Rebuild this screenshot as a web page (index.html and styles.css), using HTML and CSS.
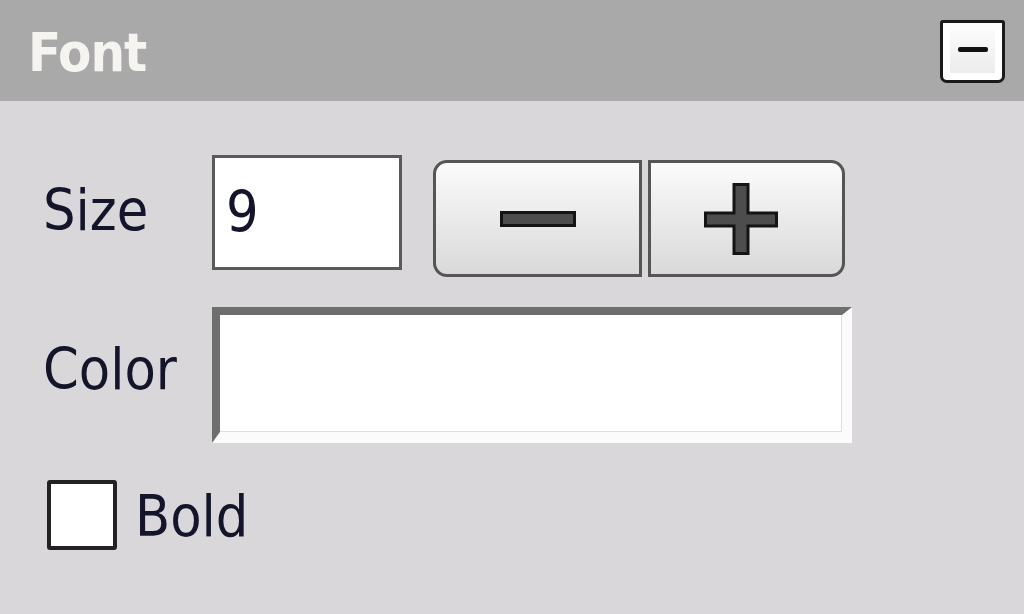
FILE: index.html
```html
<!DOCTYPE html>
<html>
<head>
<meta charset="utf-8">
<link rel="stylesheet" href="styles.css">
</head>
<body>
<div class="panel">
  <div class="header">
    <span class="title">Font</span>
    <div class="collapse">
      <div class="collapse-inner"><span class="collapse-bar"></span></div>
    </div>
  </div>
  <div class="content">
    <div class="row row-size">
      <label class="label">Size</label>
      <div class="size-input">9</div>
      <div class="stepper">
        <div class="step step-minus">
          <svg width="76" height="16" viewBox="0 0 76 16"><rect x="1.5" y="1.5" width="73" height="13" fill="#4d4d4d" stroke="#141414" stroke-width="3"/></svg>
        </div>
        <div class="step step-plus">
          <svg width="74" height="72" viewBox="0 0 74 72"><path d="M30 1.5 H44 V30 H72.5 V43 H44 V70.5 H30 V43 H1.5 V30 H30 Z" fill="#4d4d4d" stroke="#141414" stroke-width="3" stroke-linejoin="miter"/></svg>
        </div>
      </div>
    </div>
    <div class="row row-color">
      <label class="label">Color</label>
      <div class="color-box"></div>
    </div>
    <div class="row row-bold">
      <span class="checkbox"></span>
      <span class="check-label">Bold</span>
    </div>
  </div>
</div>
</body>
</html>
```
FILE: styles.css
```css
html, body {
  margin: 0;
  padding: 0;
}
body {
  width: 1024px;
  height: 614px;
  overflow: hidden;
  background: #d9d7da;
  font-family: "DejaVu Sans Condensed", "DejaVu Sans", sans-serif;
  font-stretch: condensed;
  color: #14142a;
}
.panel {
  width: 1024px;
  height: 614px;
  display: flex;
  flex-direction: column;
}
.header {
  height: 101px;
  background: #a9a9a9;
  display: flex;
  align-items: center;
  justify-content: space-between;
  padding: 0 19px 0 28px;
  box-sizing: border-box;
}
.title {
  font-weight: bold;
  font-size: 54px;
  letter-spacing: -1px;
  color: #f6f4f0;
  line-height: 1;
  margin-top: 4px;
}
.collapse {
  width: 65px;
  height: 63px;
  box-sizing: border-box;
  border: 3px solid #1a1a1a;
  border-radius: 3px 3px 7px 7px;
  background: #ffffff;
  padding: 7px;
  margin-top: 2px;
}
.collapse-inner {
  width: 100%;
  height: 100%;
  background: linear-gradient(#fbfbfb, #ececec);
  display: flex;
  align-items: center;
  justify-content: center;
}
.collapse-bar {
  width: 30px;
  height: 5px;
  background: #111;
  border-radius: 2px;
  margin-top: -4px;
}
.content {
  padding: 54px 0 0 43px;
  display: flex;
  flex-direction: column;
}
.row {
  display: flex;
  align-items: center;
}
.label {
  width: 169px;
  font-size: 57px;
  line-height: 1;
}
.row-size {
  align-items: flex-start;
  height: 122px;
}
.row-size .label {
  margin-top: 27px;
}
.size-input {
  width: 190px;
  height: 115px;
  box-sizing: border-box;
  border: 3px solid #5a5a5a;
  background: #ffffff;
  font-size: 57px;
  line-height: 1;
  padding: 26px 0 0 11px;
}
.stepper {
  display: flex;
  margin: 5px 0 0 31px;
  gap: 6px;
}
.step {
  height: 117px;
  box-sizing: border-box;
  border: 3px solid #555;
  background: linear-gradient(#fbfbfb, #d9d9d9);
  display: flex;
  align-items: center;
  justify-content: center;
}
.step-minus {
  width: 209px;
  border-radius: 14px 0 0 14px;
}
.step-plus {
  width: 197px;
  border-radius: 0 14px 14px 0;
  padding-right: 12px;
}
.row-color {
  margin-top: 30px;
}
.row-color .label {
  margin-top: -12px;
}
.color-box {
  width: 640px;
  height: 136px;
  box-sizing: border-box;
  background: #ffffff;
  border-style: solid;
  border-width: 8px 10px 11px 8px;
  border-color: #6e6e6e #fbfbfb #fbfbfb #6e6e6e;
  box-shadow: inset -1px -1px 0 #dedede;
}
.row-bold {
  margin-top: 37px;
}
.checkbox {
  width: 70px;
  height: 70px;
  box-sizing: border-box;
  border: 4px solid #222;
  border-radius: 3px;
  background: #ffffff;
  margin-left: 4px;
}
.check-label {
  font-size: 57px;
  line-height: 1;
  margin-left: 18px;
  margin-top: 2px;
}
```
